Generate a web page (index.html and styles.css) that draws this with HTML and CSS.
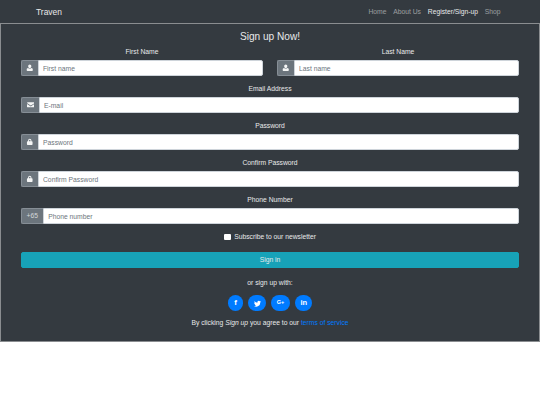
FILE: index.html
```html
<!DOCTYPE html>
<html lang="en">
<head>
<meta charset="utf-8">
<title>Traven</title>
<link rel="stylesheet" href="styles.css">
</head>
<body>
<svg class="defs" width="0" height="0" aria-hidden="true">
  <symbol id="i-user" viewBox="0 0 16 16"><path d="M8 1.200c2 0 3.400 1.600 3.400 3.700S10 8.800 8 8.800 4.600 7 4.600 4.900 6 1.200 8 1.200zM4.300 8.400C5.300 9.500 6.600 10 8 10s2.700-.5 3.700-1.600c1.900.2 2.800 1.700 2.800 3.800v1.300c0 .9-.6 1.500-1.500 1.500H3c-.9 0-1.500-.6-1.500-1.500v-1.300c0-2.100.9-3.600 2.800-3.800z"/></symbol>
  <symbol id="i-mail" viewBox="0 0 16 16"><path d="M1.500 2.500h13c.8 0 1.500.7 1.500 1.500v.5L8 9.800 0 4.500V4c0-.8.7-1.500 1.500-1.500zM0 6.300l8 5.200 8-5.200V12c0 .8-.7 1.500-1.500 1.500h-13C.7 13.500 0 12.800 0 12z"/></symbol>
  <symbol id="i-lock" viewBox="0 0 16 16"><path d="M4.500 7V5a3.500 3.500 0 0 1 7 0v2h1c.8 0 1.500.7 1.500 1.500v5c0 .8-.7 1.500-1.500 1.500h-9c-.8 0-1.500-.7-1.500-1.500v-5C2 7.700 2.700 7 3.500 7zm2 0h3V5a1.500 1.500 0 0 0-3 0z"/></symbol>
  <symbol id="i-tw" viewBox="0 0 16 16"><path d="M16 3.500c-.6.3-1.200.4-1.900.5.700-.4 1.200-1 1.400-1.800-.6.4-1.300.7-2.100.8A3.300 3.300 0 0 0 7.800 6C5.100 5.900 2.700 4.600 1.100 2.600c-.9 1.500-.4 3.400 1 4.400-.5 0-1-.2-1.500-.4 0 1.600 1.100 3 2.600 3.300-.5.1-1 .1-1.500 0 .4 1.300 1.600 2.200 3.100 2.300A6.600 6.600 0 0 1 0 13.500 9.300 9.300 0 0 0 14.400 5.200c.6-.5 1.200-1 1.600-1.700z"/></symbol>
</svg>

<div class="page">
<nav class="navbar">
  <a class="brand" href="#">Traven</a>
  <ul class="nav-links">
    <li><a href="#">Home</a></li>
    <li><a href="#">About Us</a></li>
    <li><a class="active" href="#">Register/Sign-up</a></li>
    <li><a href="#">Shop</a></li>
  </ul>
</nav>

<main class="card">
  <h3 class="title">Sign up Now!</h3>
  <form>
    <div class="two-col">
      <div class="field">
        <label for="first">First Name</label>
        <div class="input-group">
          <span class="addon"><svg class="icon"><use href="#i-user"/></svg></span>
          <input id="first" type="text" placeholder="First name">
        </div>
      </div>
      <div class="field">
        <label for="last">Last Name</label>
        <div class="input-group">
          <span class="addon"><svg class="icon"><use href="#i-user"/></svg></span>
          <input id="last" type="text" placeholder="Last name">
        </div>
      </div>
    </div>
    <div class="field">
      <label for="email">Email Address</label>
      <div class="input-group">
        <span class="addon wide"><svg class="icon"><use href="#i-mail"/></svg></span>
        <input id="email" type="text" placeholder="E-mail">
      </div>
    </div>
    <div class="field">
      <label for="pw">Password</label>
      <div class="input-group">
        <span class="addon"><svg class="icon"><use href="#i-lock"/></svg></span>
        <input id="pw" type="text" placeholder="Password">
      </div>
    </div>
    <div class="field">
      <label for="pw2">Confirm Password</label>
      <div class="input-group">
        <span class="addon"><svg class="icon"><use href="#i-lock"/></svg></span>
        <input id="pw2" type="text" placeholder="Confirm Password">
      </div>
    </div>
    <div class="field">
      <label for="phone">Phone Number</label>
      <div class="input-group">
        <span class="addon code">+65</span>
        <input id="phone" type="text" placeholder="Phone number">
      </div>
    </div>
    <div class="subscribe">
      <span class="box"></span>
      <span>Subscribe to our newsletter</span>
    </div>
    <button class="submit" type="button">Sign in</button>
    <p class="or">or sign up with:</p>
    <div class="social">
      <a class="s-btn fb" href="#">f</a>
      <a class="s-btn tw" href="#"><svg class="tw-icon"><use href="#i-tw"/></svg></a>
      <a class="s-btn gp" href="#">G+</a>
      <a class="s-btn li" href="#">in</a>
    </div>
    <p class="terms">By clicking <em>Sign up</em> you agree to our <a href="#">terms of service</a></p>
  </form>
</main>
</div>
</body>
</html>
```

FILE: styles.css
```css
* { box-sizing: border-box; }
html, body { margin: 0; padding: 0; background: #fff; }
body {
  font-family: "Liberation Sans", Arial, sans-serif;
  font-size: 6.75px;
  line-height: 10px;
  color: #e8e9ea;
}
.defs { position: absolute; }
a { text-decoration: none; }
.page { opacity: .999; }

.navbar {
  height: 23px;
  background: #343a40;
  display: flex;
  align-items: center;
  justify-content: space-between;
  padding: 0 36px;
}
.brand { color: #e8e9ea; font-size: 8.45px; }
.nav-links { list-style: none; display: flex; margin: 0; padding: 0; }
.nav-links a { display: block; padding: 0 3.4px; color: rgba(255,255,255,.5); }
.nav-links a.active { color: #e8e9ea; }

.card {
  height: 319px;
  background: #343a40;
  border: 1px solid #8a8d90;
  padding: 6.5px 20px 0;
}
.title {
  margin: 0 0 4.5px;
  font-size: 10.1px;
  font-weight: 400;
  line-height: 12px;
  text-align: center;
}
.two-col { display: grid; grid-template-columns: 1fr 1fr; gap: 14px; }
.field { margin-bottom: 8px; }
label { display: block; text-align: center; margin-bottom: 3px; }
.input-group { display: flex; height: 16px; }
.addon {
  flex: none;
  width: 16.5px;
  display: flex;
  align-items: center;
  justify-content: center;
  background: #6c757d;
  border: 1px solid #868e96;
  border-right: 0;
  border-radius: 2px 0 0 2px;
  color: #d5d8da;
}
.addon.wide { width: 17.5px; }
.addon.code { width: 21.7px; }
.icon { width: 7.5px; height: 7.5px; fill: #f4f5f5; }
input {
  flex: 1;
  min-width: 0;
  height: 16px;
  padding: 0 4.5px;
  border: 1px solid #ced4da;
  border-radius: 0 2px 2px 0;
  background: #fff;
  color: #495057;
  font: inherit;
  outline: 0;
}
input::placeholder { color: #6c757d; opacity: 1; }

.subscribe {
  display: flex;
  justify-content: center;
  align-items: center;
  gap: 3.4px;
  height: 10px;
}
.box { width: 6.75px; height: 6.75px; background: #fff; border-radius: 1px; }

.submit {
  display: block;
  width: 100%;
  height: 16px;
  margin-top: 10px;
  padding: 0;
  border: 1px solid #17a2b8;
  border-radius: 2px;
  background: #17a2b8;
  color: #e8e9ea;
  font: inherit;
}
.or { margin: 10px 0 0; text-align: center; }
.social { display: flex; justify-content: center; gap: 5px; margin-top: 7px; }
.s-btn {
  height: 16px;
  border-radius: 8px;
  background: #007bff;
  color: #fff;
  display: flex;
  align-items: center;
  justify-content: center;
  font-weight: 700;
  font-size: 7px;
  line-height: 1;
}
.fb { width: 15.5px; font-size: 8px; }
.tw { width: 17.7px; }
.gp { width: 19.3px; font-size: 5.5px; }
.li { width: 17px; font-size: 7.5px; }
.tw-icon { width: 7px; height: 7px; fill: #fff; }
.terms { margin: 7px 0 0; text-align: center; }
.terms a { color: #007bff; }
```
